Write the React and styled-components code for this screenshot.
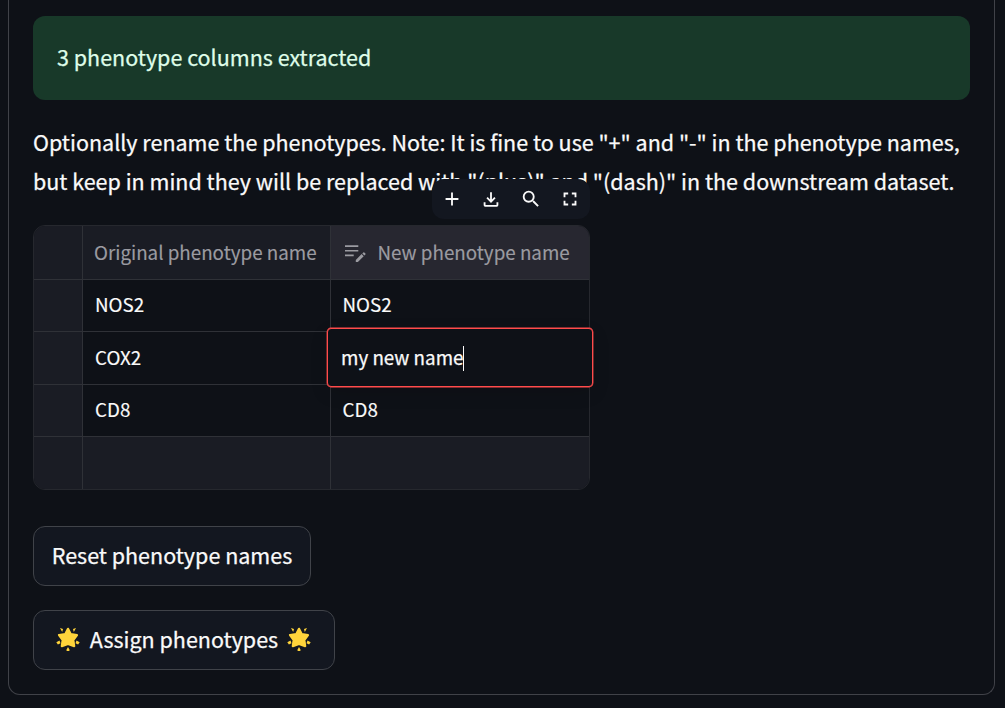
import React from "react";
import styled, { createGlobalStyle } from "styled-components";

const GlobalStyle = createGlobalStyle`
  *, *::before, *::after { box-sizing: border-box; }
  body {
    margin: 0;
    overflow: hidden;
    background: #0e1117;
    color: #fafafa;
    font-family: "Noto Sans CJK SC", "Noto Sans", sans-serif;
    font-size: 21.5px;
    line-height: 37px;
    -webkit-text-stroke: 0.25px currentColor;
  }
`;

const Page = styled.main`
  height: 708px;
  padding: 0 10px 13px 8px;
`;

const Panel = styled.section`
  height: 695px;
  padding: 16px 24px 24px;
  border: 1px solid #404248;
  border-top: 0;
  border-radius: 0 0 12px 12px;
  display: flex;
  flex-direction: column;
  align-items: flex-start;
`;

const Alert = styled.div`
  width: 937px;
  height: 84px;
  padding: 0 24px 3px;
  display: flex;
  align-items: center;
  border-radius: 12px;
  background: #183929;
  color: #dffde9;
`;

const Note = styled.p`
  margin: 22px 0 0;
  height: 79px;
  line-height: 39px;
  white-space: nowrap;
`;

const TableWrap = styled.div`
  position: relative;
  margin-top: 24px;
  width: 557px;
`;

const Toolbar = styled.div`
  position: absolute;
  top: -46px;
  right: 0;
  width: 158px;
  height: 40px;
  padding: 0 9px;
  display: flex;
  align-items: center;
  justify-content: space-between;
  border-radius: 12px;
  background: #131720;
`;

const ToolIcon = styled.svg`
  width: 22px;
  height: 22px;
  fill: #fafafa;
`;

const Grid = styled.div`
  height: 265px;
  display: grid;
  grid-template-columns: 49px 248px 258px;
  grid-template-rows: 54px 52px 53px 52px 52px;
  border: 1px solid #26282e;
  border-radius: 12px;
  overflow: hidden;
  font-size: 18.8px;
  -webkit-text-stroke: 0.15px currentColor;
`;

const Cell = styled.div`
  display: flex;
  align-items: center;
  padding: 0 0 4px ${(p) => (p.$last ? 11.5 : 12)}px;
  border-right: ${(p) => (p.$last ? 0 : 1)}px solid #2f3137;
  border-bottom: ${(p) => (p.$bottom ? 0 : 1)}px solid #2f3137;
  background: ${(p) => (p.$shade ? "#1a1c24" : "#0e1117")};
`;

const HeadCell = styled(Cell)`
  padding: 0 0 3px ${(p) => (p.$active ? 12 : 11)}px;
  color: #9b9ba1;
  background: ${(p) => (p.$active ? "#272730" : "#1a1c24")};
`;

const EditIcon = styled.svg`
  width: 24px;
  height: 24px;
  margin: 3px 10.5px 0 0;
  fill: #9b9ba1;
`;

const Editor = styled.div`
  position: absolute;
  left: 294px;
  top: 103px;
  width: 266px;
  height: 59px;
  padding: 0 13px 3px;
  display: flex;
  align-items: center;
  border: 1px solid #ff4b4b;
  border-radius: 4px;
  background: #0e1117;
  font-size: 18.8px;
  box-shadow: 0 0 0 0.4px #ff4b4b, 0 6px 18px rgba(0, 0, 0, 0.12);
`;

const Caret = styled.span`
  width: 1px;
  height: 25px;
  margin-top: 4px;
  background: #fafafa;
`;

const Button = styled.button`
  width: ${(p) => p.$width}px;
  height: 60px;
  margin: ${(p) => p.$gap}px 0 0;
  padding: 0 0 3px;
  display: flex;
  align-items: center;
  justify-content: center;
  gap: 9px;
  border: 1px solid #404349;
  border-radius: 12px;
  background: #131720;
  color: inherit;
  font: inherit;
  -webkit-text-stroke: inherit;
  white-space: nowrap;
`;

const StarIcon = styled.svg`
  width: 24px;
  height: 24px;
  margin-top: 1px;
  fill: #ffd43b;

  &:first-child {
    margin-left: -1px;
    margin-right: 1px;
  }
`;

const tools = [
  "M19 13h-6v6h-2v-6H5v-2h6V5h2v6h6v2z",
  "M18 15.5v3H6v-3H4v3c0 1.1.9 2 2 2h12c1.1 0 2-.9 2-2v-3h-2zm-1-4.2-1.41-1.41L13 12.47V4.5h-2v7.97L8.41 9.89 7 11.3l5 5 5-5z",
  "M15.5 14h-.79l-.28-.27A6.471 6.471 0 0 0 16 9.5 6.5 6.5 0 1 0 9.5 16c1.61 0 3.09-.59 4.23-1.57l.27.28v.79l5 4.99L20.49 19l-4.99-5zm-6 0C7.01 14 5 11.99 5 9.5S7.01 5 9.5 5 14 7.01 14 9.5 11.99 14 9.5 14z",
  "M5 5h5v2H7v3H5V5zm9 0h5v5h-2V7h-3V5zM5 14h2v3h3v2H5v-5zm12 0h2v5h-5v-2h3v-3z",
];

const rows = ["NOS2", "COX2", "CD8"];

function Star() {
  return (
    <StarIcon viewBox="0 0 24 24">
      <path
        d="M12 1.8 14.8 7.2 21 8 17.3 13 18.2 19.2 12 17 5.8 19.2 6.7 13 3 8 9.2 7.2Z"
        stroke="#ffd43b"
        strokeWidth="2.2"
        strokeLinejoin="round"
      />
      <path d="M4 1l3 1-.8 3zM20 1l-3 1 .8 3zM.3 15.2l3.2-1.8 1 2.8-2.6 1.3zM23.7 15.2l-3.2-1.8-1 2.8 2.6 1.3zM12 20l1.8 3.2-1 .8h-1.6l-1-.8z" />
    </StarIcon>
  );
}

export default function App() {
  return (
    <Page>
      <GlobalStyle />
      <Panel>
        <Alert>3 phenotype columns extracted</Alert>
        <Note>
          Optionally rename the phenotypes. Note: It is fine to use "+" and "-" in the phenotype names,
          <br />
          but keep in mind they will be replaced with "(plus)" and "(dash)" in the downstream dataset.
        </Note>
        <TableWrap>
          <Grid>
            <HeadCell />
            <HeadCell>Original phenotype name</HeadCell>
            <HeadCell $active $last>
              <EditIcon viewBox="0 0 24 24">
                <path d="M2 4.3h13.3v1.6H2zM2 8.9h13.3v1.6H2zM2 13.6h8.7v1.6H2zM12.8 18.9l5.8-5.8 2.1 2.1-5.8 5.8h-2.1zM19.3 12.4l1-1q.5-.4 1 0l1.1 1.1q.4.5 0 1l-1 1z" />
              </EditIcon>
              New phenotype name
            </HeadCell>
            {rows.map((name) => (
              <React.Fragment key={name}>
                <Cell $shade />
                <Cell>{name}</Cell>
                <Cell $last>{name === "COX2" ? "" : name}</Cell>
              </React.Fragment>
            ))}
            <Cell $shade $bottom />
            <Cell $shade $bottom />
            <Cell $shade $bottom $last />
          </Grid>
          <Toolbar>
            {tools.map((d) => (
              <ToolIcon key={d} viewBox="0 0 24 24">
                <path d={d} />
              </ToolIcon>
            ))}
          </Toolbar>
          <Editor>
            my new name
            <Caret />
          </Editor>
        </TableWrap>
        <Button $width={278} $gap={36}>Reset phenotype names</Button>
        <Button $width={302} $gap={24}>
          <Star />
          Assign phenotypes
          <Star />
        </Button>
      </Panel>
    </Page>
  );
}
